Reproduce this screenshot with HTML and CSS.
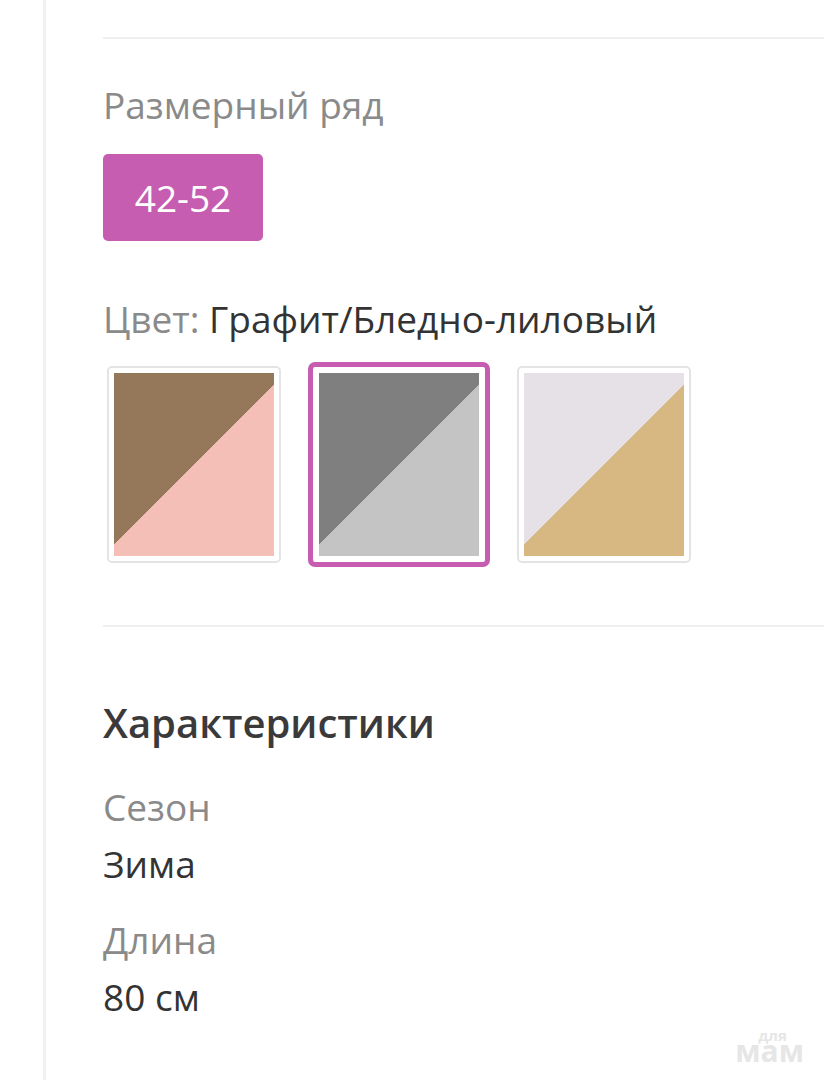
FILE: index.html
```html
<!DOCTYPE html>
<html lang="ru">
<head>
<meta charset="utf-8">
<title>Товар</title>
<link rel="stylesheet" href="styles.css">
</head>
<body>
<div class="page">
  <div class="divider"></div>
  <section class="size-section">
    <div class="label">Размерный ряд</div>
    <div class="size-btn">42-52</div>
  </section>
  <section class="color-section">
    <div class="label">Цвет: <span class="value">Графит/Бледно-лиловый</span></div>
    <div class="swatches">
      <div class="swatch"><div class="chip chip-brown"></div></div>
      <div class="swatch selected"><div class="chip chip-grey"></div></div>
      <div class="swatch"><div class="chip chip-gold"></div></div>
    </div>
  </section>
  <div class="divider divider-2"></div>
  <section class="specs">
    <h2 class="specs-title">Характеристики</h2>
    <div class="spec">
      <div class="label">Сезон</div>
      <div class="value">Зима</div>
    </div>
    <div class="spec">
      <div class="label">Длина</div>
      <div class="value">80 см</div>
    </div>
  </section>
</div>
<div class="watermark"><span class="wm-small">для</span><span class="wm-big">мам</span></div>
</body>
</html>
```
FILE: styles.css
```css
html, body {
  margin: 0;
  padding: 0;
  background: #ffffff;
}
body {
  font-family: "Open Sans", "Noto Sans", sans-serif;
  color: #333333;
  width: 824px;
  height: 1080px;
  overflow: hidden;
  position: relative;
}
.page {
  margin-left: 43px;
  border-left: 3px solid #f1f1f1;
  padding-left: 57px;
  padding-top: 37px;
  min-height: 1043px;
}
.divider {
  height: 2px;
  background: #efefef;
}
.label {
  font-size: 37px;
  line-height: 48px;
  color: #8a8a8a;
}
.value {
  font-size: 37px;
  line-height: 48px;
  color: #333333;
}
.size-section {
  padding-top: 42px;
}
.size-btn {
  margin-top: 25px;
  width: 160px;
  height: 87px;
  border-radius: 5px;
  background: #c65db1;
  color: #ffffff;
  font-size: 37px;
  line-height: 87px;
  text-align: center;
}
.color-section {
  padding-top: 54px;
}
.swatches {
  display: flex;
  gap: 31px;
  margin-top: 23px;
  padding-left: 4px;
}
.swatch {
  border: 2px solid #e4e4e4;
  padding: 5px;
  border-radius: 5px;
}
.swatch.selected {
  border: 5px solid #c65db1;
  padding: 6px;
  margin: -4px;
  border-radius: 7px;
}
.chip {
  width: 160px;
  height: 183px;
}
.chip-brown {
  background: linear-gradient(135deg, #957759 50%, #f4bfb6 50%);
}
.chip-grey {
  background: linear-gradient(135deg, #7f7f7f 50%, #c4c4c4 50%);
}
.chip-gold {
  background: linear-gradient(135deg, #e5e1e6 50%, #d7b782 50%);
}
.divider-2 {
  margin-top: 62px;
}
.specs {
  padding-top: 70px;
}
.specs-title {
  margin: 0;
  font-size: 40px;
  line-height: 52px;
  font-weight: 600;
  color: #3a3a3a;
}
.spec {
  margin-top: 34px;
}
.spec + .spec {
  margin-top: 28px;
}
.spec .value {
  margin-top: 9px;
}
.watermark {
  position: absolute;
  right: 20px;
  bottom: 18px;
  display: flex;
  flex-direction: column;
  align-items: center;
  color: #e6e6e6;
  font-weight: 700;
}
.wm-small {
  font-size: 15px;
  line-height: 10px;
  padding-left: 6px;
}
.wm-big {
  font-size: 30px;
  line-height: 22px;
}
```
